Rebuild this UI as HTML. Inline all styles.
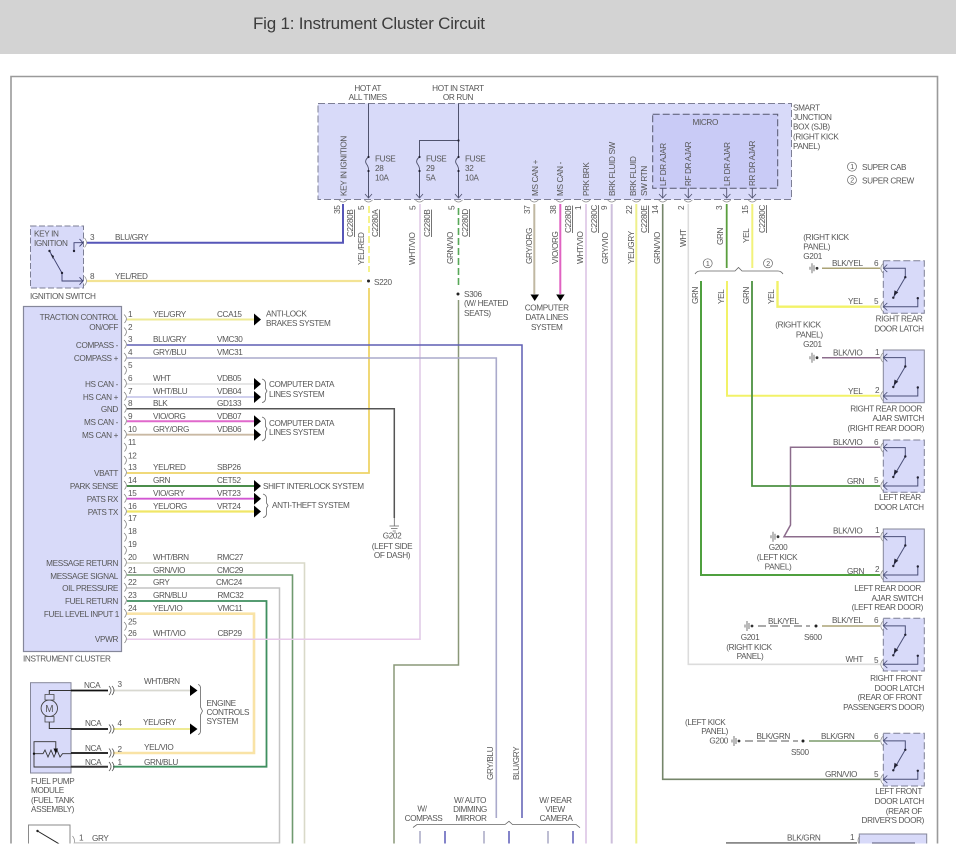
<!DOCTYPE html>
<html><head><meta charset="utf-8"><title>Fig 1: Instrument Cluster Circuit</title>
<style>
html,body{margin:0;padding:0;background:#fff;width:956px;height:856px;overflow:hidden}
svg{display:block;position:absolute;left:0;top:0}
text{font-family:"Liberation Sans",sans-serif;font-size:8.2px;letter-spacing:-.36px;fill:#565656}
.e{text-anchor:end}.m{text-anchor:middle}
.u{text-decoration:underline}
.d{filter:blur(.28px)}
</style></head><body>
<svg width="956" height="856" viewBox="0 0 956 856" xmlns="http://www.w3.org/2000/svg">
<defs>
<clipPath id="c"><rect x="0" y="0" width="956" height="843.5"/></clipPath>
<g id="lat">
<path d="M0 7.6H22V16.5M34.5 37.5V46H0" stroke="#4a4f78" stroke-width="1"/>
<path d="M22 16.5L10 37" stroke="#4a4f78" stroke-width="1"/>
<path d="M4 3.8L0 7.6L4 11.4M4 42.2L0 46L4 49.8" stroke="#4a4f78" stroke-width=".8"/>
<path d="M-.5 3Q-4.5 7.6-.5 12.2M-.5 41.4Q-4.5 46-.5 50.6" stroke="#888" stroke-width=".7"/>
<circle cx="22" cy="16.5" r="1.2" fill="#223"/><circle cx="10" cy="37" r="1.2" fill="#223"/><circle cx="34.5" cy="37.5" r="1.2" fill="#223"/>
<path d="M10.5 35L11.2 29.5L15 31.8Z" fill="#223"/>
</g>
<g id="gnd">
<path d="M-7 -1.5v3M-5 -5v10M-3 -3v6" stroke="#555" stroke-width=".8"/>
<circle cx="0" cy="0" r="1.4" fill="#333"/>
</g>
</defs>

<rect x="0" y="0" width="956" height="54" fill="#d3d3d3"/>
<text x="253" y="29" style="font-size:17px;fill:#3c3c3c;letter-spacing:0" textLength="232">Fig 1: Instrument Cluster Circuit</text>

<g clip-path="url(#c)" fill="none" class="d">
<path d="M11 844V76.5H937.5V844" stroke="#9a9a9a" stroke-width="1.6"/>

<!-- boxes -->
<rect x="318" y="103.5" width="473.5" height="96" fill="#d8daf9" stroke="#7d7f95" stroke-width="1" stroke-dasharray="7 3"/>
<rect x="652.7" y="114.3" width="125" height="74" fill="#c9cbf6" stroke="#55576f" stroke-width="1" stroke-dasharray="7 3"/>
<rect x="30.5" y="226" width="53" height="62" fill="#d8daf9" stroke="#7d7f95" stroke-width="1" stroke-dasharray="6 2.5"/>
<rect x="23.5" y="306.5" width="98" height="345" fill="#d8daf9" stroke="#85879a" stroke-width="1.2"/>
<rect x="30.5" y="682.7" width="40.5" height="90.3" fill="#d8daf9" stroke="#85879a" stroke-width="1"/>
<rect x="28.5" y="825" width="41.5" height="30" fill="#fff" stroke="#8a8a8a" stroke-width="1"/>

<!-- latch boxes -->
<rect x="883.3" y="260.7" width="41" height="52.6" fill="#d8daf9" stroke="#7d7f95" stroke-dasharray="7 3"/>
<rect x="883.3" y="350" width="41" height="52.7" fill="#d8daf9" stroke="#85879a"/>
<rect x="883.3" y="440" width="41" height="52.3" fill="#d8daf9" stroke="#7d7f95" stroke-dasharray="7 3"/>
<rect x="883.3" y="529" width="41" height="52.7" fill="#d8daf9" stroke="#85879a"/>
<rect x="883.3" y="618.3" width="41" height="52.7" fill="#d8daf9" stroke="#7d7f95" stroke-dasharray="7 3"/>
<rect x="883.3" y="733.3" width="41" height="52.7" fill="#d8daf9" stroke="#7d7f95" stroke-dasharray="7 3"/>
<rect x="859.3" y="834" width="67.4" height="20" fill="#d8daf9" stroke="#85879a"/>

<!-- wires: left region -->
<path d="M87 242.7H343V204" stroke="#5656b8" stroke-width="2"/>
<path d="M87 281H362" stroke="#f3e394" stroke-width="2.2"/>
<path d="M369 206V272" stroke="#f3f070" stroke-width="1.6" stroke-dasharray="7 3"/>
<path d="M369 288V473H127" stroke="#eed468" stroke-width="1.8"/>
<path d="M420 204V639.3H127" stroke="#dfc8e6" stroke-width="1.5"/>
<path d="M458.5 208V288" stroke="#58a858" stroke-width="1.6" stroke-dasharray="7 3"/>
<path d="M458.5 300V665H394V845" stroke="#8a9878" stroke-width="1.5"/>
<path d="M127 319.5H254" stroke="#eeea94" stroke-width="2"/>
<path d="M127 345H522V818" stroke="#5e5eb4" stroke-width="1.5"/>
<path d="M127 358H496.3V818" stroke="#aaaacb" stroke-width="1.6"/>
<path d="M127 384H254" stroke="#ddd" stroke-width="1.6"/>
<path d="M127 397H254" stroke="#c9c9ec" stroke-width="1.8"/>
<path d="M127 408.7H394.3V518" stroke="#555" stroke-width="1.5"/>
<path d="M127 421.3H254" stroke="#e069cc" stroke-width="2"/>
<path d="M127 434.7H254" stroke="#c9b9a4" stroke-width="1.8"/>
<path d="M127 486H254" stroke="#4b8d4b" stroke-width="2"/>
<path d="M127 498.7H254" stroke="#d256d2" stroke-width="1.8"/>
<path d="M127 511.5H254" stroke="#f0e668" stroke-width="2.2"/>
<path d="M127 563H304.5V845" stroke="#d9d9c9" stroke-width="1.6"/>
<path d="M127 575H292.5V845" stroke="#6f9a6f" stroke-width="1.6"/>
<path d="M127 588H279.5V843H75" stroke="#c3c3c3" stroke-width="1.5"/>
<path d="M127 601H266.5V766.7H113" stroke="#3f8f5f" stroke-width="1.8"/>
<path d="M127 613.7H254V753H113" stroke="#f9e3a6" stroke-width="2.6"/>
<path d="M127 639.3H420" stroke="#e8c9ea" stroke-width="1.4"/>
<!-- fuel pump wires -->
<path d="M113 690.5H190" stroke="#d8d8d0" stroke-width="1.8"/>
<path d="M113 729H190" stroke="#eeea94" stroke-width="2"/>

<!-- sjb bottom wires -->
<path d="M534.3 204V294" stroke="#c0b8a2" stroke-width="2"/>
<path d="M560.3 204V294" stroke="#e062c2" stroke-width="2"/>
<path d="M586 204V845" stroke="#dcc4e4" stroke-width="1.6"/>
<path d="M611.7 204V845" stroke="#cdbfdc" stroke-width="2"/>
<path d="M636.3 204V845" stroke="#eef08c" stroke-width="2"/>
<path d="M662.7 204V779.3H880" stroke="#75866a" stroke-width="1.6"/>
<path d="M688.3 204V664.3H880" stroke="#dcdcdc" stroke-width="1.6"/>
<path d="M726.7 204V268" stroke="#5a9e3e" stroke-width="1.8"/>
<path d="M752.3 204V268" stroke="#f2f27a" stroke-width="2"/>
<path d="M701 281V575H880" stroke="#4fa03f" stroke-width="2"/>
<path d="M727 281V395.7H880" stroke="#f2f268" stroke-width="2"/>
<path d="M752 281V486H880" stroke="#4c9142" stroke-width="1.8"/>
<path d="M777.5 281V306.7H880" stroke="#f2f268" stroke-width="2.4"/>
<!-- right small wires -->
<path d="M822 268.3H880" stroke="#aba376" stroke-width="1.5"/>
<path d="M822 357.7H880" stroke="#8c6c8c" stroke-width="1.5"/>
<path d="M880 447.3H790.5V525L784 536.7H880" stroke="#8c6c8c" stroke-width="1.5"/>
<path d="M822 626H880" stroke="#aba376" stroke-width="1.5"/>
<path d="M758 626H810" stroke="#777" stroke-width="1.2" stroke-dasharray="8 4"/>
<path d="M809 741H880" stroke="#7c9c6c" stroke-width="1.5"/>
<path d="M745 741H798" stroke="#777" stroke-width="1.2" stroke-dasharray="8 4"/>
<path d="M726 843H857" stroke="#444" stroke-width="1.2"/>
<path d="M872 843H915" stroke="#557" stroke-width="1"/>
<!-- bottom stubs -->
<path d="M420 831V845M484 831V845M548 831V845" stroke="#a2a2c0" stroke-width="1.4"/>
<path d="M445 831V845M509 831V845M573 831V845" stroke="#5050b4" stroke-width="1.4"/>

<!-- SJB internals -->
<path d="M368.5 103.5V157M368.5 171V198M458.5 103.5V157M458.5 171V198M458.5 140.5H419.5V157M419.5 171V198" stroke="#50536e" stroke-width="1"/>
<path d="M368.5 157Q364 160.5 366.5 164T368.5 171M419.5 157Q415 160.5 417.5 164T419.5 171M458.5 157Q454 160.5 456.5 164T458.5 171" stroke="#50536e" stroke-width=".9"/>
<g fill="#223"><circle cx="368.5" cy="157" r="1.1"/><circle cx="368.5" cy="171" r="1.1"/><circle cx="419.5" cy="157" r="1.1"/><circle cx="419.5" cy="171" r="1.1"/><circle cx="458.5" cy="157" r="1.1"/><circle cx="458.5" cy="171" r="1.1"/><circle cx="458.5" cy="140.5" r="1.1"/></g>
<path d="M365 194L368.5 198L372 194M416 194L419.5 198L423 194M455 194L458.5 198L462 194M659 194L662.7 198L666.4 194M684.6 194L688.3 198L692 194M723 194L726.7 198L730.4 194M748.6 194L752.3 198L756 194" stroke="#50536e" stroke-width=".8"/>
<path d="M662.7 188V198M688.3 188V198M726.7 188V198M752.3 188V198" stroke="#50536e" stroke-width=".9"/>
<path d="M339 200Q343 204 347 200M364.5 200Q368.5 204 372.5 200M415.5 200Q419.5 204 423.5 200M454.5 200Q458.5 204 462.5 200M530.3 200Q534.3 204 538.3 200M556.3 200Q560.3 204 564.3 200M582 200Q586 204 590 200M607.7 200Q611.7 204 615.7 200M632.3 200Q636.3 204 640.3 200M658.7 200Q662.7 204 666.7 200M684.3 200Q688.3 204 692.3 200M722.7 200Q726.7 204 730.7 200M748.3 200Q752.3 204 756.3 200" stroke="#888" stroke-width=".7"/>

<!-- key switch -->
<path d="M83 242.7H74V251M62 273V281H83M49.5 251L62 273M79.5 239L83 242.7L79.5 246.4M79.5 277.3L83 281L79.5 284.7" stroke="#3d4070" stroke-width=".9"/>
<g fill="#223"><circle cx="49.5" cy="251" r="1.2"/><circle cx="62" cy="273" r="1.2"/><circle cx="74" cy="251" r="1.2"/><path d="M50.5 254L54 256L53 259Z"/></g>
<path d="M84.5 238Q88.5 242.7 84.5 247.4M84.5 276.3Q88.5 281 84.5 285.7" stroke="#888" stroke-width=".7"/>

<!-- cluster pin arcs -->
<path d="M124 314.5q4.5 4 .5 8.5M124 327.5q4.5 4 .5 8.5M124 340q4.5 4 .5 8.5M124 353q4.5 4 .5 8.5M124 366q4.5 4 .5 8.5M124 379q4.5 4 .5 8.5M124 392q4.5 4 .5 8.5M124 404q4.5 4 .5 8.5M124 416.5q4.5 4 .5 8.5M124 430q4.5 4 .5 8.5M124 443q4.5 4 .5 8.5M124 456q4.5 4 .5 8.5M124 468q4.5 4 .5 8.5M124 481q4.5 4 .5 8.5M124 494q4.5 4 .5 8.5M124 507q4.5 4 .5 8.5M124 520q4.5 4 .5 8.5M124 533q4.5 4 .5 8.5M124 546q4.5 4 .5 8.5M124 558q4.5 4 .5 8.5M124 570q4.5 4 .5 8.5M124 583q4.5 4 .5 8.5M124 596q4.5 4 .5 8.5M124 609q4.5 4 .5 8.5M124 622q4.5 4 .5 8.5M124 634.5q4.5 4 .5 8.5" stroke="#777" stroke-width=".7"/>

<!-- arrows -->
<g fill="#000">
<path d="M254 313.5L261 319.5L254 325.5Z"/><path d="M254 378L261 384L254 390Z"/><path d="M254 391L261 397L254 403Z"/><path d="M254 415.3L261 421.3L254 427.3Z"/><path d="M254 428.7L261 434.7L254 440.7Z"/><path d="M254 480L261 486L254 492Z"/><path d="M254 492.7L261 498.7L254 504.7Z"/><path d="M254 505.5L261 511.5L254 517.5Z"/>
<path d="M190 685L197.5 690.5L190 696Z"/><path d="M190 723.5L197.5 729L190 734.5Z"/>
<path d="M530.5 294.5H539L534.7 301Z"/><path d="M556.2 294.5H564.7L560.4 301Z"/>
</g>
<!-- braces -->
<path d="M262 379Q266 380 265.500 385V388.500L267 391L265.500 393.500V397Q266 402 262 402.500M262 417Q266 418 265.500 423V426.500L267 429L265.500 431.500V435Q266 440 262 441M263 494Q267 495 266.500 500V503L268 505.500L266.500 508V512Q267 517 263 517.500M198 684.500Q201 685 200.500 690V707L202.500 711L200.500 715V729Q201 734 198 734.500" stroke="#666" stroke-width=".8"/>
<path d="M695 274Q697 271 700 271H735L738.5 267.5L742 271H778Q781 271 783 274" stroke="#666" stroke-width=".8"/>
<path d="M413 827.5L417 824.5H505L509 821.3L512.5 824.5H576L580 827.7" stroke="#666" stroke-width=".8"/>
<!-- grounds -->
<path d="M394.3 518V526M389.5 526H399M391 528.5H397.5M392.7 531H395.9" stroke="#666" stroke-width=".8"/>
<use href="#gnd" x="817" y="268.3"/><use href="#gnd" x="817" y="357.7"/><use href="#gnd" x="778" y="536.7"/><use href="#gnd" x="752" y="626"/><use href="#gnd" x="739" y="741"/>
<g fill="#222"><circle cx="368.5" cy="281" r="1.5"/><circle cx="458" cy="294" r="1.5"/><circle cx="816" cy="626" r="1.5"/><circle cx="803" cy="741" r="1.5"/></g>
<!-- latches -->
<use href="#lat" x="883.3" y="260.7"/><use href="#lat" x="883.3" y="350"/><use href="#lat" x="883.3" y="440"/><use href="#lat" x="883.3" y="529"/><use href="#lat" x="883.3" y="618.3"/><use href="#lat" x="883.3" y="733.3"/>
<path d="M860 836Q856 840 860 846" stroke="#888" stroke-width=".7"/>

<!-- fuel pump internals -->
<path d="M71 690.5H49.3V694M49.3 722V728.5H71" stroke="#333" stroke-width="1"/>
<path d="M71 690.5H108M71 729H108M71 753H108" stroke="#111" stroke-width="1.7"/>
<path d="M71 766.7H108" stroke="#333" stroke-width="2"/>
<circle cx="49.3" cy="708.3" r="8.2" fill="#d8daf9" stroke="#444" stroke-width=".9"/>
<path d="M45 694.5H54V700H45ZM45 716.5H54V722H45Z" fill="#d8daf9" stroke="#444" stroke-width=".8"/>
<text x="49.3" y="712" class="m" style="font-size:10px">M</text>
<path d="M34 753.7V741.7H55.8V750M34 753.7V767H71M34 753.7H43L45 750L48 757L51 750L54 757L57 750L60 757L62.5 753.7H71" stroke="#333" stroke-width=".9"/>
<path d="M53.5 748.5H58L55.8 754Z" fill="#111"/><circle cx="34" cy="753.7" r="1.2" fill="#111"/>
<path d="M109 686Q113 690.5 109 695M112 686Q116 690.5 112 695M109 724.5Q113 729 109 733.5M112 724.5Q116 729 112 733.5M109 748.5Q113 753 109 757.5M112 748.5Q116 753 112 757.5M109 762Q113 766.7 109 771M112 762Q116 766.7 112 771" stroke="#555" stroke-width=".8"/>
<path d="M37.5 831L61 845" stroke="#222" stroke-width="1"/><circle cx="37.5" cy="831" r="1.2" fill="#222"/>
<path d="M72.5 836Q76.5 841 72.5 846" stroke="#888" stroke-width=".7"/>

<!-- circled numbers -->
<g fill="none" stroke="#666" stroke-width=".7"><circle cx="707.7" cy="263.3" r="4.5"/><circle cx="768" cy="263.3" r="4.5"/><circle cx="852" cy="166.7" r="4.5"/><circle cx="852" cy="180" r="4.5"/></g>
<text x="707.7" y="265.8" class="m" style="font-size:7px">1</text><text x="768" y="265.8" class="m" style="font-size:7px">2</text><text x="852" y="169.2" class="m" style="font-size:7px">1</text><text x="852" y="182.5" class="m" style="font-size:7px">2</text>

<!-- top text -->
<text x="367.7" y="91" class="m">HOT AT</text><text x="367.7" y="100" class="m">ALL TIMES</text>
<text x="458" y="91" class="m">HOT IN START</text><text x="458" y="100" class="m">OR RUN</text>
<text x="375" y="161.5">FUSE</text><text x="375" y="171">28</text><text x="375" y="180.5">10A</text>
<text x="426" y="161.5">FUSE</text><text x="426" y="171">29</text><text x="426" y="180.5">5A</text>
<text x="465" y="161.5">FUSE</text><text x="465" y="171">32</text><text x="465" y="180.5">10A</text>
<text x="793" y="110.7">SMART</text><text x="793" y="120">JUNCTION</text><text x="793" y="129.7">BOX (SJB)</text><text x="793" y="139.7">(RIGHT KICK</text><text x="793" y="149">PANEL)</text>
<text x="692.5" y="125">MICRO</text>
<text x="862" y="170">SUPER CAB</text><text x="862" y="183.5">SUPER CREW</text>

<!-- rotated SJB labels -->
<text transform="translate(346.5,196) rotate(-90)">KEY IN IGNITION</text>
<text transform="translate(538,196) rotate(-90)">MS CAN +</text>
<text transform="translate(563,196) rotate(-90)">MS CAN -</text>
<text transform="translate(589,196) rotate(-90)">PRK BRK</text>
<text transform="translate(615,196) rotate(-90)">BRK FLUID SW</text>
<text transform="translate(636,196) rotate(-90)">BRK FLUID</text>
<text transform="translate(647,196) rotate(-90)">SW RTN</text>
<text transform="translate(666,186) rotate(-90)">LF DR AJAR</text>
<text transform="translate(691,186) rotate(-90)">RF DR AJAR</text>
<text transform="translate(730,186) rotate(-90)">LR DR AJAR</text>
<text transform="translate(755,186) rotate(-90)">RR DR AJAR</text>
<!-- rotated pins -->
<text transform="translate(340,214) rotate(-90)">35</text>
<text transform="translate(364,210) rotate(-90)">5</text>
<text transform="translate(415.5,210) rotate(-90)">5</text>
<text transform="translate(454.5,210) rotate(-90)">5</text>
<text transform="translate(530,214) rotate(-90)">37</text>
<text transform="translate(556,214) rotate(-90)">38</text>
<text transform="translate(581,210) rotate(-90)">1</text>
<text transform="translate(607,210) rotate(-90)">9</text>
<text transform="translate(632,214) rotate(-90)">22</text>
<text transform="translate(658,214) rotate(-90)">14</text>
<text transform="translate(684,210) rotate(-90)">2</text>
<text transform="translate(722,210) rotate(-90)">3</text>
<text transform="translate(748,214) rotate(-90)">15</text>
<!-- connector labels -->
<text transform="translate(353,237) rotate(-90)" class="u">C2280B</text>
<text transform="translate(378,237) rotate(-90)" class="u">C2280A</text>
<text transform="translate(430,237) rotate(-90)" class="u">C2280B</text>
<text transform="translate(468,237) rotate(-90)" class="u">C2280D</text>
<text transform="translate(571,233) rotate(-90)" class="u">C2280B</text>
<text transform="translate(597,233) rotate(-90)" class="u">C2280C</text>
<text transform="translate(647,233) rotate(-90)" class="u">C2280E</text>
<text transform="translate(765,233) rotate(-90)" class="u">C2280C</text>
<!-- rotated wire labels -->
<text transform="translate(364,265) rotate(-90)">YEL/RED</text>
<text transform="translate(415,265) rotate(-90)">WHT/VIO</text>
<text transform="translate(453,264) rotate(-90)">GRN/VIO</text>
<text transform="translate(532,264) rotate(-90)">GRY/ORG</text>
<text transform="translate(558,264) rotate(-90)">VIO/ORG</text>
<text transform="translate(583,264) rotate(-90)">WHT/VIO</text>
<text transform="translate(608,264) rotate(-90)">GRY/VIO</text>
<text transform="translate(634,264) rotate(-90)">YEL/GRY</text>
<text transform="translate(660,264) rotate(-90)">GRN/VIO</text>
<text transform="translate(686,247) rotate(-90)">WHT</text>
<text transform="translate(723,245) rotate(-90)">GRN</text>
<text transform="translate(749,243) rotate(-90)">YEL</text>
<text transform="translate(698,304) rotate(-90)">GRN</text>
<text transform="translate(724,304) rotate(-90)">YEL</text>
<text transform="translate(749,304) rotate(-90)">GRN</text>
<text transform="translate(774,304) rotate(-90)">YEL</text>
<text transform="translate(493,780) rotate(-90)">GRY/BLU</text>
<text transform="translate(519,780) rotate(-90)">BLU/GRY</text>

<!-- key switch text -->
<text x="34" y="236.6">KEY IN</text><text x="34" y="246">IGNITION</text>
<text x="90" y="240">3</text><text x="90" y="279">8</text>
<text x="115" y="240">BLU/GRY</text><text x="115" y="279">YEL/RED</text>
<text x="30" y="299">IGNITION SWITCH</text>
<text x="374" y="285">S220</text>
<text x="464" y="297">S306</text><text x="464" y="306">(W/ HEATED</text><text x="464" y="316">SEATS)</text>
<text x="546.7" y="310.7" class="m">COMPUTER</text><text x="546.7" y="320" class="m">DATA LINES</text><text x="546.7" y="330" class="m">SYSTEM</text>

<!-- cluster labels -->
<text x="118" y="320" class="e">TRACTION CONTROL</text><text x="118" y="330" class="e">ON/OFF</text>
<text x="118" y="348" class="e">COMPASS -</text><text x="118" y="361" class="e">COMPASS +</text>
<text x="118" y="387" class="e">HS CAN -</text><text x="118" y="400" class="e">HS CAN +</text><text x="118" y="412" class="e">GND</text>
<text x="118" y="425" class="e">MS CAN -</text><text x="118" y="438" class="e">MS CAN +</text>
<text x="118" y="476" class="e">VBATT</text><text x="118" y="489" class="e">PARK SENSE</text><text x="118" y="502" class="e">PATS RX</text><text x="118" y="515" class="e">PATS TX</text>
<text x="118" y="566" class="e">MESSAGE RETURN</text><text x="118" y="579" class="e">MESSAGE SIGNAL</text><text x="118" y="591" class="e">OIL PRESSURE</text><text x="118" y="604" class="e">FUEL RETURN</text><text x="119" y="617" class="e">FUEL LEVEL INPUT 1</text><text x="118" y="642" class="e">VPWR</text>
<text x="23" y="661.5">INSTRUMENT CLUSTER</text>

<!-- pin numbers -->
<text x="128" y="317">1</text><text x="128" y="330">2</text><text x="128" y="342">3</text><text x="128" y="355">4</text><text x="128" y="368">5</text><text x="128" y="381">6</text><text x="128" y="394">7</text><text x="128" y="406">8</text><text x="128" y="419">9</text><text x="128" y="432">10</text><text x="128" y="445">11</text><text x="128" y="458.5">12</text><text x="128" y="470">13</text><text x="128" y="483">14</text><text x="128" y="496">15</text><text x="128" y="509">16</text><text x="128" y="521">17</text><text x="128" y="534">18</text><text x="128" y="547">19</text><text x="128" y="560">20</text><text x="128" y="573">21</text><text x="128" y="585">22</text><text x="128" y="598">23</text><text x="128" y="611">24</text><text x="128" y="624.5">25</text><text x="128" y="636">26</text>

<!-- wire name columns -->
<text x="153" y="317">YEL/GRY</text><text x="217" y="317">CCA15</text>
<text x="153" y="342">BLU/GRY</text><text x="217" y="342">VMC30</text>
<text x="153" y="355">GRY/BLU</text><text x="217" y="355">VMC31</text>
<text x="153" y="381">WHT</text><text x="217" y="381">VDB05</text>
<text x="153" y="394">WHT/BLU</text><text x="217" y="394">VDB04</text>
<text x="153" y="406">BLK</text><text x="217" y="406">GD133</text>
<text x="153" y="419">VIO/ORG</text><text x="217" y="419">VDB07</text>
<text x="153" y="432">GRY/ORG</text><text x="217" y="432">VDB06</text>
<text x="153" y="470">YEL/RED</text><text x="217" y="470">SBP26</text>
<text x="153" y="483">GRN</text><text x="217" y="483">CET52</text>
<text x="153" y="496">VIO/GRY</text><text x="217" y="496">VRT23</text>
<text x="153" y="509">YEL/ORG</text><text x="217" y="509">VRT24</text>
<text x="153" y="560">WHT/BRN</text><text x="217" y="560">RMC27</text>
<text x="153" y="573">GRN/VIO</text><text x="217" y="573">CMC29</text>
<text x="153" y="585">GRY</text><text x="216" y="585">CMC24</text>
<text x="153" y="598">GRN/BLU</text><text x="217.5" y="598">RMC32</text>
<text x="153" y="611">YEL/VIO</text><text x="217.5" y="611">VMC11</text>
<text x="153" y="636">WHT/VIO</text><text x="217.5" y="636">CBP29</text>

<!-- system labels -->
<text x="266" y="316.7">ANTI-LOCK</text><text x="266" y="326">BRAKES SYSTEM</text>
<text x="269" y="387">COMPUTER DATA</text><text x="269" y="397">LINES SYSTEM</text>
<text x="269" y="426">COMPUTER DATA</text><text x="269" y="435">LINES SYSTEM</text>
<text x="263" y="489">SHIFT INTERLOCK SYSTEM</text>
<text x="272" y="508">ANTI-THEFT SYSTEM</text>
<text x="392" y="538.3" class="m">G202</text><text x="392" y="549" class="m">(LEFT SIDE</text><text x="392" y="558" class="m">OF DASH)</text>

<!-- fuel pump text -->
<text x="84" y="688">NCA</text><text x="85" y="726">NCA</text><text x="85" y="751">NCA</text><text x="85" y="765">NCA</text>
<text x="117.5" y="687">3</text><text x="117.5" y="726">4</text><text x="117.5" y="752">2</text><text x="117.5" y="765">1</text>
<text x="144" y="684">WHT/BRN</text><text x="143" y="725">YEL/GRY</text><text x="144" y="750">YEL/VIO</text><text x="144" y="765">GRN/BLU</text>
<text x="206.5" y="706">ENGINE</text><text x="206.5" y="715">CONTROLS</text><text x="206.5" y="724">SYSTEM</text>
<text x="31" y="784">FUEL PUMP</text><text x="31" y="793">MODULE</text><text x="31" y="803">(FUEL TANK</text><text x="31" y="812">ASSEMBLY)</text>
<text x="79" y="840.7">1</text><text x="92" y="841">GRY</text>

<!-- bottom mid text -->
<text x="422" y="811.7" class="m">W/</text><text x="423.5" y="821" class="m">COMPASS</text>
<text x="470" y="803" class="m">W/ AUTO</text><text x="470" y="812" class="m">DIMMING</text><text x="471" y="821" class="m">MIRROR</text>
<text x="555.5" y="803" class="m">W/ REAR</text><text x="555" y="812" class="m">VIEW</text><text x="556" y="821" class="m">CAMERA</text>

<!-- right text -->
<text x="803.3" y="240">(RIGHT KICK</text><text x="803.3" y="249.7">PANEL)</text><text x="803.3" y="259">G201</text>
<text x="832" y="266">BLK/YEL</text><text x="874" y="266">6</text><text x="848" y="304">YEL</text><text x="874" y="304">5</text>
<text x="899" y="321.7" class="m">RIGHT REAR</text><text x="899" y="331.5" class="m">DOOR LATCH</text>
<text x="820.7" y="327.7" class="e">(RIGHT KICK</text><text x="822.7" y="337.7" class="e">PANEL)</text><text x="821.7" y="347" class="e">G201</text>
<text x="833" y="355.5">BLK/VIO</text><text x="875" y="355">1</text><text x="848" y="394">YEL</text><text x="875" y="393">2</text>
<text x="922" y="411.7" class="e">RIGHT REAR DOOR</text><text x="924" y="421" class="e">AJAR SWITCH</text><text x="924" y="431" class="e">(RIGHT REAR DOOR)</text>
<text x="833" y="445">BLK/VIO</text><text x="874" y="445">6</text><text x="847" y="484">GRN</text><text x="874" y="483">5</text>
<text x="900" y="500" class="m">LEFT REAR</text><text x="899" y="510" class="m">DOOR LATCH</text>
<text x="833" y="533.3">BLK/VIO</text><text x="875" y="533">1</text><text x="847" y="574">GRN</text><text x="875" y="572">2</text>
<text x="778" y="550" class="m">G200</text><text x="777" y="560" class="m">(LEFT KICK</text><text x="778" y="569.5" class="m">PANEL)</text>
<text x="921" y="591" class="e">LEFT REAR DOOR</text><text x="923" y="601" class="e">AJAR SWITCH</text><text x="923" y="610" class="e">(LEFT REAR DOOR)</text>
<text x="768" y="624">BLK/YEL</text><text x="832" y="623">BLK/YEL</text><text x="874" y="623">6</text>
<text x="804" y="640">S600</text>
<text x="750" y="640" class="m">G201</text><text x="749" y="650" class="m">(RIGHT KICK</text><text x="750" y="659" class="m">PANEL)</text>
<text x="845.5" y="662">WHT</text><text x="874" y="663">5</text>
<text x="922" y="681" class="e">RIGHT FRONT</text><text x="924" y="691" class="e">DOOR LATCH</text><text x="922" y="700" class="e">(REAR OF FRONT</text><text x="924" y="710" class="e">PASSENGER'S DOOR)</text>
<text x="685" y="725">(LEFT KICK</text><text x="728" y="734" class="e">PANEL)</text><text x="728" y="743.5" class="e">G200</text>
<text x="756.5" y="739">BLK/GRN</text><text x="821" y="739">BLK/GRN</text><text x="874" y="739">6</text>
<text x="791" y="755">S500</text>
<text x="825" y="777">GRN/VIO</text><text x="874" y="777">5</text>
<text x="922" y="794" class="e">LEFT FRONT</text><text x="924" y="804" class="e">DOOR LATCH</text><text x="922" y="814" class="e">(REAR OF</text><text x="924" y="823" class="e">DRIVER'S DOOR)</text>
<text x="787" y="840.7">BLK/GRN</text><text x="850" y="840">1</text>
</g>
</svg>
</body></html>
